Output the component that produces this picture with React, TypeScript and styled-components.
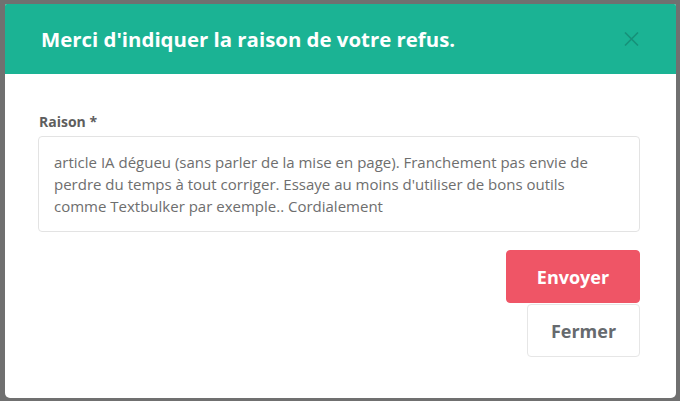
import styled, { createGlobalStyle } from "styled-components";

const GlobalStyle = createGlobalStyle`
  html, body {
    margin: 0;
    padding: 0;
    background: #707070;
  }
  * {
    box-sizing: border-box;
  }
`;

const Backdrop = styled.div`
  width: 680px;
  height: 401px;
  padding: 4px 4px 3px 5px;
  background: #707070;
`;

const Modal = styled.div`
  width: 671px;
  height: 394px;
  background: #ffffff;
  border-radius: 2px 2px 5px 5px;
  overflow: hidden;
  display: flex;
  flex-direction: column;
  font-family: "Open Sans", "Noto Sans", sans-serif;
`;

const Header = styled.div`
  height: 70px;
  flex-shrink: 0;
  background: #1bb394;
  display: flex;
  align-items: center;
  justify-content: space-between;
  padding: 0 37px 0 36px;
`;

const Title = styled.h2`
  margin: 0;
  color: #ffffff;
  font-size: 20.4px;
  font-weight: 700;
`;

const CloseButton = styled.button`
  width: 16px;
  height: 16px;
  padding: 0;
  border: none;
  background: transparent;
  display: flex;
  align-items: center;
  justify-content: center;
  cursor: pointer;
  margin-top: -1px;
`;

const Body = styled.div`
  padding: 38px 36px 0 33px;
  display: flex;
  flex-direction: column;
`;

const Label = styled.label`
  color: #5e5e5e;
  font-size: 14px;
  font-weight: 700;
  line-height: 20px;
  padding-left: 1px;
  margin-bottom: 4px;
`;

const TextArea = styled.textarea`
  width: 602px;
  height: 96px;
  resize: none;
  border: 1px solid #e3e3e3;
  border-radius: 4px;
  padding: 14px 20px 14px 15px;
  font-family: "Open Sans", "Noto Sans", sans-serif;
  font-size: 15px;
  line-height: 22px;
  color: #6e6e6e;
  outline: none;
  overflow: hidden;
`;

const Actions = styled.div`
  margin-top: 18px;
  display: flex;
  flex-direction: column;
  align-items: flex-end;
  gap: 1px;
`;

const Button = styled.button<{ $variant: "primary" | "secondary" }>`
  height: 53px;
  width: ${(p) => (p.$variant === "primary" ? "134px" : "113px")};
  border-radius: 4px;
  font-family: "Open Sans", "Noto Sans", sans-serif;
  font-size: 18px;
  font-weight: 700;
  cursor: pointer;
  border: 1px solid
    ${(p) => (p.$variant === "primary" ? "#ef5566" : "#e6e6e6")};
  background: ${(p) => (p.$variant === "primary" ? "#ef5566" : "#ffffff")};
  color: ${(p) => (p.$variant === "primary" ? "#ffffff" : "#666a6e")};
`;

export default function App(): JSX.Element {
  return (
    <Backdrop>
      <GlobalStyle />
      <Modal>
        <Header>
          <Title>Merci d'indiquer la raison de votre refus.</Title>
          <CloseButton aria-label="Fermer">
            <svg width="15" height="14" viewBox="0 0 15 14">
              <path
                d="M1 0.5 L14 13.5 M14 0.5 L1 13.5"
                stroke="#16917a"
                strokeWidth="1.6"
                fill="none"
              />
            </svg>
          </CloseButton>
        </Header>
        <Body>
          <Label>Raison *</Label>
          <TextArea
            readOnly
            value="article IA dégueu (sans parler de la mise en page). Franchement pas envie de perdre du temps à tout corriger. Essaye au moins d'utiliser de bons outils comme Textbulker par exemple.. Cordialement"
          />
          <Actions>
            <Button $variant="primary">Envoyer</Button>
            <Button $variant="secondary">Fermer</Button>
          </Actions>
        </Body>
      </Modal>
    </Backdrop>
  );
}
